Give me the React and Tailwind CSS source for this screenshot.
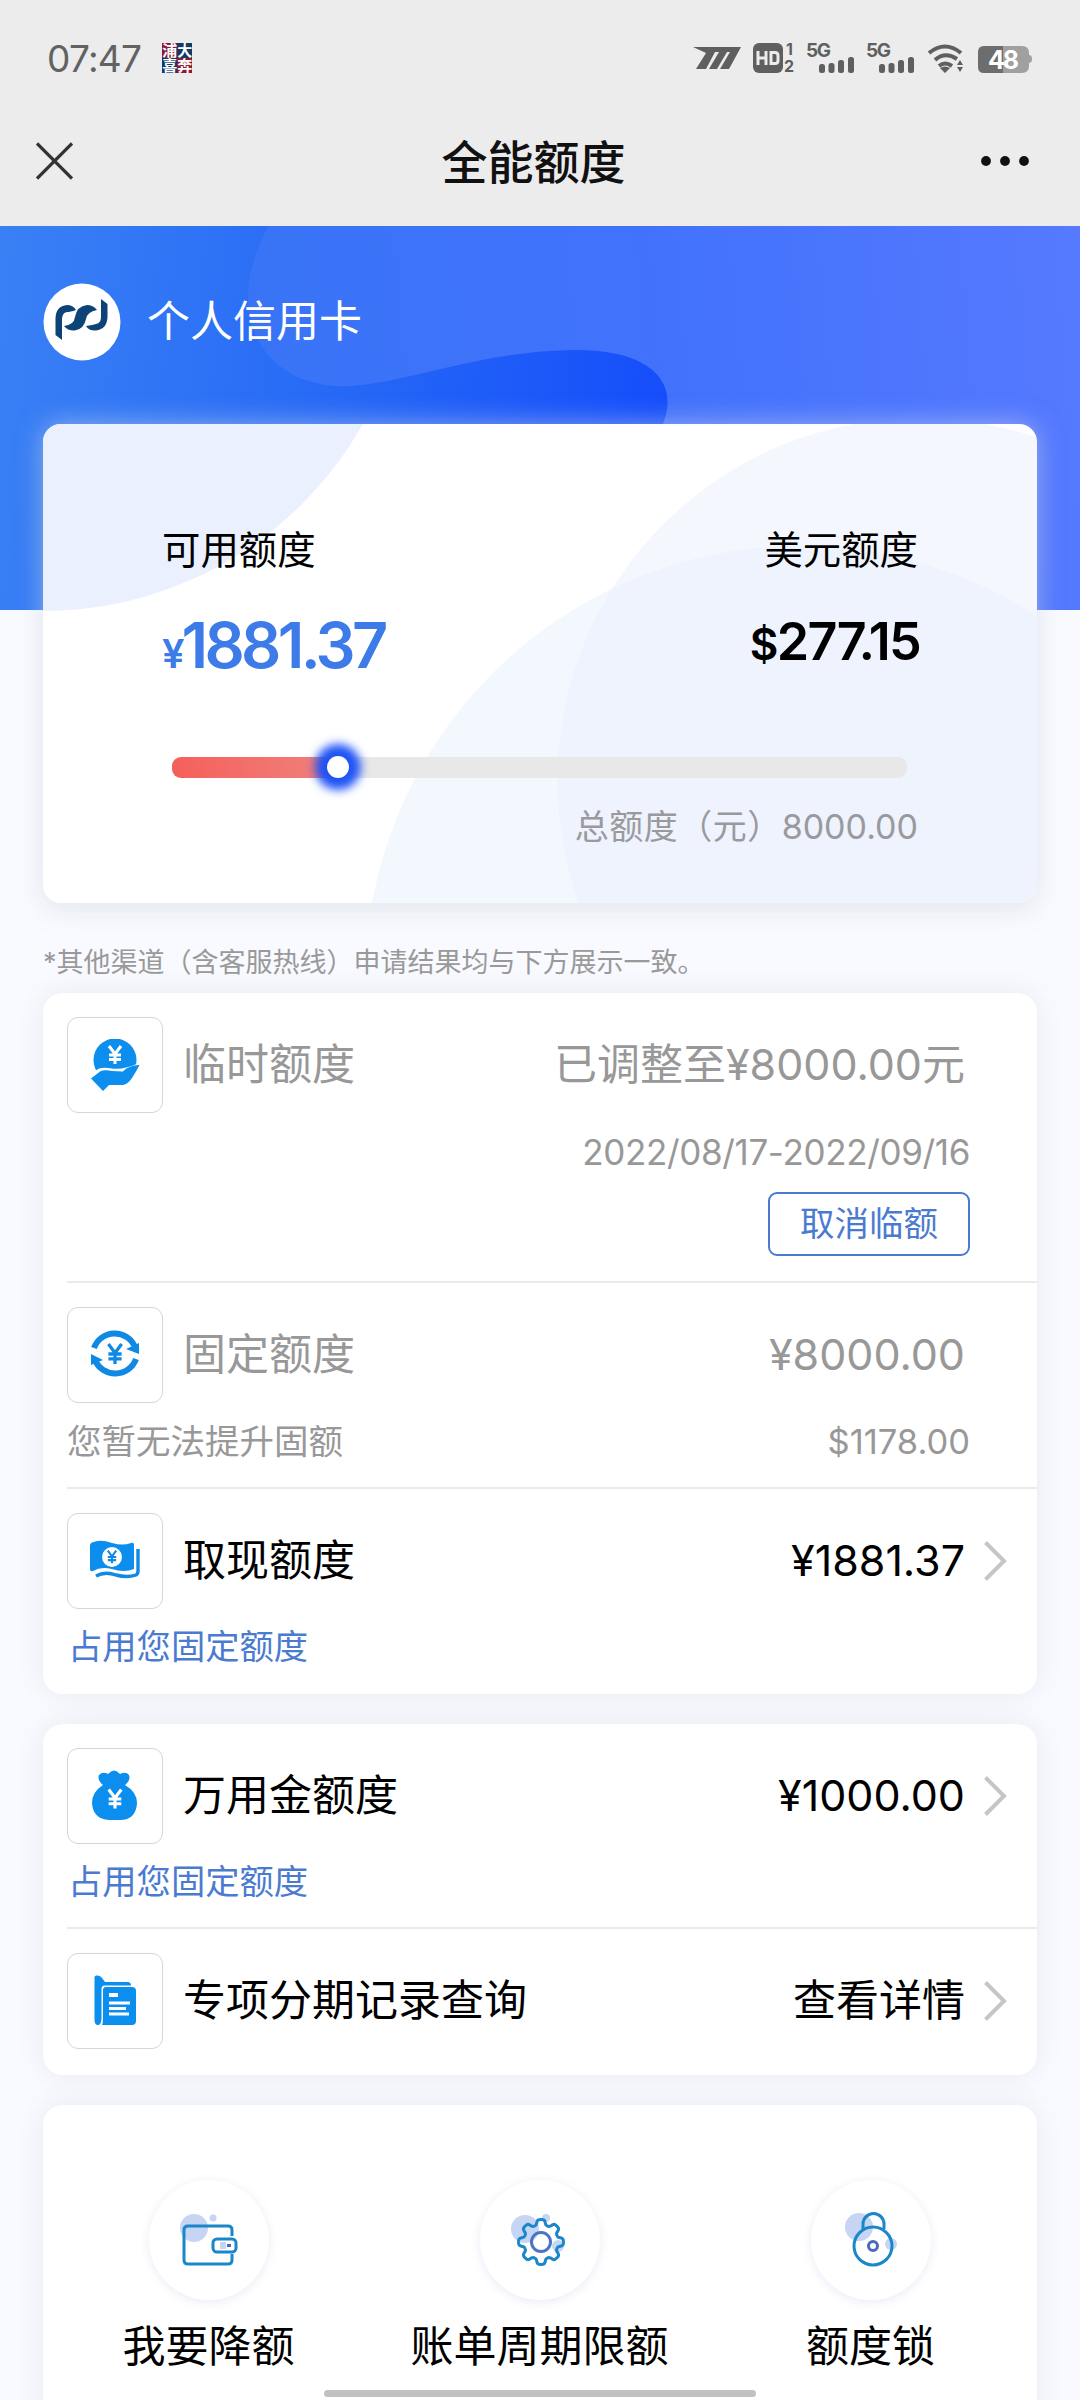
import React from "react";

const FONT = "font-['Inter','Noto_Sans_CJK_SC',sans-serif]";

function StatusBar() {
  return (
    <div className="flex h-[116px] items-center pl-[47px] pr-[48px] text-[#626262]">
      <span className="text-[37px] leading-none tracking-[-0.700px]">07:47</span>
      <div className="ml-[21px] grid h-[30px] w-[30px] grid-cols-2 text-[15px] font-bold leading-[15px] text-white">
        <span className="bg-[#8c1a35]">浦</span>
        <span className="bg-[#123a66]">大</span>
        <span className="bg-[#123a66]">喜</span>
        <span className="bg-[#8c1a35]">奔</span>
      </div>
      <svg className="ml-auto" width="340" height="64" viewBox="692 25 340 64" fill="#5f5f5f">
        <path d="M693 46 H741 L729 68 H720 L730 51 H727 L717 68 H709 L719 51 H715 L706 68 H696 L706 52 Z" />
        <rect x="753" y="42" width="30" height="30" rx="6" />
        <path d="M758 50v14M766 50v14M758 57h8M771 51.500h4q3 0 3 3v5q0 3-3 3h-4z" fill="none" stroke="#ececec" strokeWidth="3" />
        <g fontFamily="Inter" fontWeight="700">
          <text x="786" y="54" fontSize="16">1</text>
          <text x="784" y="71" fontSize="16">2</text>
          <text x="806" y="56" fontSize="19" textLength="25">5G</text>
          <text x="866" y="56" fontSize="19" textLength="25">5G</text>
        </g>
        {[819, 879].map((x) => (
          <g key={x}>
            <rect x={x} y="63" width="6" height="9" rx="2.500" />
            <rect x={x + 9.500} y="62" width="6" height="10" rx="2.500" />
            <rect x={x + 19} y="59" width="6" height="13" rx="2.500" />
            <rect x={x + 29} y="56" width="6" height="16" rx="2.500" />
          </g>
        ))}
        <g fill="none" stroke="#5f5f5f" strokeWidth="4">
          <path d="M929 52 Q945 39 961 52" />
          <path d="M935 59 Q945 50 957 58" />
          <path d="M939 65 Q945 60 952 65" />
        </g>
        <path d="M940 67 Q945 64 950 67 L945 72 Z M957 64 L960 59 L963 64 Z M957 66 H963 L960 71 Z" />
        <path d="M984 45 H1003 V72 H984 Q978 72 978 66 V51 Q978 45 984 45" fill="#6d6d6d" />
        <path d="M1003 45 H1022 Q1029 45 1029 52 V54 Q1032 54 1032 58 Q1032 62 1029 62 V65 Q1029 72 1022 72 H1003Z" fill="#a0a0a0" />
        <text x="988" y="68" fontSize="25" fontWeight="700" fontFamily="Inter" fill="#fff" textLength="31">48</text>
      </svg>
    </div>
  );
}

function NavBar() {
  return (
    <div className="flex h-[110px] items-center justify-between pl-[36px] pr-[50px] pb-[20px]">
      <svg width="37" height="38" viewBox="0 0 37 38" stroke="#333" strokeWidth="3.200">
        <path d="M1 1.500 L36 36.500 M36 1.500 L1 36.500" />
      </svg>
      <h1 className="mt-[2px] ml-[14px] text-[46px] font-medium leading-none text-[#111]">全能额度</h1>
      <svg width="50" height="12" viewBox="0 0 50 12" fill="#111">
        <circle cx="6" cy="6" r="4.900" />
        <circle cx="25" cy="6" r="4.900" />
        <circle cx="44" cy="6" r="4.900" />
      </svg>
    </div>
  );
}

function BankLogo() {
  return (
    <svg width="78" height="78" viewBox="0 0 78 78">
      <circle cx="39" cy="39" r="38.500" fill="#fff" />
      <path d="M12.500 52 V35 Q13 23 24 22 Q30 22 33 27 Q27 29 24 29 Q19 30 19 36 V57 Z" fill="#0d4377" />
      <path d="M64.500 21 V34 Q64 46 53 47.500 Q46 48 43 43 Q50 42 53 41 Q58 40 58 34 V16 Z" fill="#0d4377" />
      <path d="M21 43 Q31 42 32 34 Q34 23 44 22 Q50 22 54 27 Q44 29 43 36 Q41 46 32 47.500 Q25 48 21 43 Z" fill="#0d4377" />
    </svg>
  );
}

function Banner() {
  return (
    <section className="relative h-[384px] pt-[57px] pl-[43px]">
      <svg className="absolute inset-0" width="1080" height="384" viewBox="0 226 1080 384">
        <defs>
          <linearGradient id="deep" x1="0" x2="680" y1="300" y2="360" gradientUnits="userSpaceOnUse">
            <stop offset="0" stopColor="#3980f5" />
            <stop offset="0.500" stopColor="#2769f6" />
            <stop offset="1" stopColor="#154dfb" />
          </linearGradient>
          <linearGradient id="light" x1="240" x2="1080" y1="400" y2="330" gradientUnits="userSpaceOnUse">
            <stop offset="0" stopColor="#3874f6" />
            <stop offset="0.500" stopColor="#4272fc" />
            <stop offset="1" stopColor="#5579ff" />
          </linearGradient>
        </defs>
        <rect y="226" width="1080" height="384" fill="url(#deep)" />
        <path d="M268 226 C250 262 240 300 256 335 C272 372 310 388 350 386 C410 382 480 352 570 350 C640 348 682 375 663 424 L640 610 H1080 V226 Z" fill="url(#light)" />
      </svg>
      <div className="relative flex items-center">
        <BankLogo />
        <span className="ml-[26px] mt-[-2px] text-[43px] leading-none text-white">个人信用卡</span>
      </div>
    </section>
  );
}

function QuotaCard() {
  return (
    <section className="relative mx-[43px] mt-[-186px] h-[479px] rounded-[18px] bg-white shadow-[0_0_26px_rgba(225,230,240,0.55),0_8px_26px_rgba(0,0,0,0.06)]">
      <svg className="absolute inset-0 rounded-[18px]" width="994" height="479" viewBox="43 424 994 479">
        <circle cx="43" cy="244" r="367" fill="#eaf0fe" />
        <circle cx="800" cy="981" r="435" fill="#f3f7fe" />
        <circle cx="919.500" cy="780" r="362" fill="#e8effd" fillOpacity="0.480" />
      </svg>
      <div className="relative flex flex-col pl-[119px] pr-[119px] pt-[107px]">
        <div className="flex justify-between text-[38.400px] leading-[38px] text-black">
          <span>可用额度</span>
          <span>美元额度</span>
        </div>
        <div className="mt-[44px] flex h-[64px] justify-between font-semibold">
          <div className="text-[63px] leading-[64px] tracking-[-3.700px] text-[#3d7be8]">
            <span className="text-[40px] tracking-[-3px]">¥</span>1881.37
          </div>
          <div className="mt-[-3px] mr-[-2px] text-[52px] leading-[64px] tracking-[-1.700px] text-black">
            <span className="text-[44px]">$</span>277.15
          </div>
        </div>
        <div className="relative mt-[80px] ml-[10px] h-[21px] w-[735px] rounded-[9px] bg-[#e8e8e8]">
          <div className="h-[21px] w-[166px] rounded-l-[9px] bg-gradient-to-r from-[#f65f5b] to-[#ee817c]" />
          <div className="absolute left-[155px] top-[-1px] h-[22px] w-[22px] rounded-full bg-white shadow-[0_0_10px_12px_#1f54f5]" />
        </div>
        <div className="mt-[32px] text-right text-[34px] leading-[34px] text-[#9a9a9e]">
          <span className="tracking-[0.500px]">总额度（元）</span>8000.00
        </div>
      </div>
    </section>
  );
}

const Yen = ({ x, y, s = 1, color }) => (
  <path transform={`translate(${x} ${y}) scale(${s})`} d="M-6 -9 L0 -1 L6 -9 M0 -1 V9 M-6 0 H6 M-6 4.500 H6" fill="none" stroke={color} strokeWidth="3" />
);

const icons = {
  hand: (
    <>
      <circle cx="25" cy="21" r="21.500" fill="#0b8eee" />
      <path d="M-6 39 L9 29.500 Q14 28 22 29.500 Q34 31 49 24 L58 24 V60 H-6 Z" fill="#fff" />
      <path d="M1 39.500 L10 32.500 Q14 30.500 22 32 L33 32.500 Q38 26.500 49.500 26 Q47 31 42 39 Q38 45 33 46 H19 L13 52 Z" fill="#0b8eee" />
      <Yen x={25} y={16} color="#fff" />
    </>
  ),
  cycle: (
    <>
      <g fill="none" stroke="#1089e4" strokeWidth="6">
        <path d="M4 19 A22 22 0 0 1 45 18" />
        <path d="M46 30 A22 22 0 0 1 5 31" />
      </g>
      <path d="M36 20 L49 14 V25 Z M1 25 L13 31 L1 36 Z" fill="#1089e4" />
      <Yen x={25} y={25} s={1.100} color="#1089e4" />
    </>
  ),
  cash: (
    <>
      <path d="M0 10 Q1 7 4 7 Q11 4 22 8 Q33 11 41 8 Q44 7 44 10 V34 Q34 38 22 34 Q11 31 3 36 Q0 37 0 34 Z" fill="#0b8eee" />
      <path d="M6 41 Q15 36 26 40 Q37 43 46 40 Q48 39 48 36 V14" fill="none" stroke="#1089e4" strokeWidth="3.400" />
      <circle cx="22" cy="22" r="10" fill="#fff" />
      <Yen x={22} y={22} s={0.700} color="#1089e4" />
    </>
  ),
  bag: (
    <>
      <path d="M13 15 Q7 10 9 5 Q13 1 18 4 Q24 -3 30 4 Q36 1 39 5 Q41 10 35 15 Q47 22 47 33 Q46 50 30 50 H19 Q3 49 2 33 Q2 22 13 15 Z" fill="#0b8eee" />
      <Yen x={25} y={29} s={1.050} color="#fff" />
    </>
  ),
  record: (
    <>
      <path d="M4.500 2 Q5 0 7 0.500 Q11 1 12 3 L15 7 H38 Q41 7 41 10.500 H14 Q11.500 11 11.500 14 V44 Q11 50 8 50 Q4.500 50 4.500 45 Z" fill="#0b8eee" />
      <path d="M16 12 H42 Q46 12 46 16 V46 Q46 50 42 50 H12 Q13 48 13 44 V15 Q13 12 16 12 Z" fill="#0b8eee" />
      <path d="M19 20 H28" stroke="#fff" strokeWidth="4" />
      <path d="M19 28 H40 M19 33.500 H36 M19 39 H39" stroke="#fff" strokeWidth="2.800" />
    </>
  ),
};

function Chevron() {
  return (
    <svg className="ml-[19px] mr-[30px]" width="23" height="40" viewBox="0 0 23 40" fill="none" stroke="#c6c6c6" strokeWidth="4">
      <path d="M1.500 1.500 L20 20 L1.500 38.500" />
    </svg>
  );
}

function Row({ icon, title, value, muted, arrow, height, last, children }) {
  return (
    <div className={`ml-[24px] ${height} ${last ? "" : "border-b-2 border-[#ebebeb]"} pt-[24px] ${muted ? "text-[#989898]" : "text-black"}`}>
      <div className="flex h-[96px] items-center">
        <div className="flex h-[96px] w-[96px] items-center justify-center rounded-[11px] border border-[#d6d6d6]">
          <svg width="50" height="52" viewBox="0 0 50 52">{icons[icon]}</svg>
        </div>
        <span className="ml-[20px] mt-[-1px] text-[43px] leading-none">{title}</span>
        <span className={`ml-auto mt-[-1px] text-[43px] leading-none ${arrow ? "" : "mr-[72px]"}`}>{value}</span>
        {arrow && <Chevron />}
      </div>
      {children}
    </div>
  );
}

const cardClass = "mx-[43px] rounded-[20px] bg-white shadow-[0_0_30px_rgba(0,0,0,0.07)]";

const Occupied = () => <div className="ml-[1px] mt-[21px] text-[34.300px] leading-[34px] text-[#4a7bd0]">占用您固定额度</div>;

function Shortcut({ label, children }) {
  return (
    <div className="flex w-[331px] flex-col items-center">
      <div className="flex h-[120px] w-[120px] items-center justify-center rounded-full bg-white shadow-[0_2px_10px_rgba(90,90,190,0.13)]">
        <svg width="60" height="60" viewBox="0 0 60 60" fill="none" stroke="#1b86c8" strokeWidth="3">
          {children}
        </svg>
      </div>
      <span className="mt-[25px] text-[43px] leading-[43px] text-black">{label}</span>
    </div>
  );
}

function gearPath(cx, cy) {
  const pts = [];
  for (let i = 0; i <= 160; i++) {
    const a = (i / 160) * Math.PI * 2;
    const r = 19.800 + 2.700 * Math.tanh(2 * Math.cos(8 * a) + 0.300);
    pts.push(`${(cx + r * Math.sin(a)).toFixed(2)} ${(cy - r * Math.cos(a)).toFixed(2)}`);
  }
  return `M${pts.join("L")}Z`;
}

export default function App() {
  return (
    <div className={`relative h-[2400px] w-[1080px] overflow-hidden bg-[#f8faff] ${FONT}`}>
      <header className="h-[226px] bg-[#ececec]">
        <StatusBar />
        <NavBar />
      </header>
      <Banner />
      <QuotaCard />
      <p className="ml-[43px] mt-[46px] h-[44px] text-[27px] leading-[28px] text-[#999]">*其他渠道（含客服热线）申请结果均与下方展示一致。</p>

      <section className={cardClass}>
        <Row icon="hand" title="临时额度" value="已调整至¥8000.00元" muted height="h-[290px]">
          <div className="mr-[67px] mt-[22px] flex flex-col items-end">
            <span className="text-[35px] leading-[35px] tracking-[-0.350px]">2022/08/17-2022/09/16</span>
            <button className="mt-[22px] h-[64px] w-[202px] rounded-[9px] border-2 border-[#4a7bd0] text-[34.500px] leading-none text-[#4a7bd0]">取消临额</button>
          </div>
        </Row>
        <Row icon="cycle" title="固定额度" value="¥8000.00" muted height="h-[206px]">
          <div className="mr-[67px] mt-[21px] flex justify-between text-[34.500px] leading-[35px]">
            <span>您暂无法提升固额</span>
            <span>$1178.00</span>
          </div>
        </Row>
        <Row icon="cash" title="取现额度" value="¥1881.37" arrow height="h-[205px]" last>
          <Occupied />
        </Row>
      </section>

      <section className={`mt-[30px] ${cardClass}`}>
        <Row icon="bag" title="万用金额度" value="¥1000.00" arrow height="h-[205px]">
          <Occupied />
        </Row>
        <Row icon="record" title="专项分期记录查询" value="查看详情" arrow height="h-[146px]" last />
      </section>

      <section className={`mt-[30px] flex h-[400px] pt-[75px] ${cardClass}`}>
        <Shortcut label="我要降额">
          <circle cx="15" cy="18" r="14" fill="#c6d5f4" stroke="none" />
          <circle cx="34" cy="8" r="3.500" fill="#c6d5f4" stroke="none" />
          <path d="M53 26 V20 Q53 16 49 16 H9 Q5 16 5 20 V50 Q5 54 9 54 H49 Q53 54 53 50 V44" />
          <rect x="34" y="29" width="23" height="13" rx="4" />
          <path d="M41 35.500 H47" stroke="#c6d5f4" strokeWidth="7" />
          <path d="M48 35.500 H52" stroke="#4a68bd" />
        </Shortcut>
        <Shortcut label="账单周期限额">
          <circle cx="15" cy="19" r="14" fill="#c6d5f4" stroke="none" />
          <circle cx="36" cy="8" r="4" fill="#c6d5f4" stroke="none" />
          <circle cx="48" cy="36" r="6" fill="#c6d5f4" stroke="none" />
          <path d={gearPath(31, 32)} />
          <circle cx="31" cy="32" r="9.500" stroke="#4a74c4" />
        </Shortcut>
        <Shortcut label="额度锁">
          <circle cx="18" cy="17" r="14" fill="#c6d5f4" stroke="none" />
          <circle cx="50" cy="34" r="6" fill="#c6d5f4" stroke="none" />
          <circle cx="32" cy="36" r="19" />
          <path d="M22 19 V14 A10.500 10.500 0 0 1 43 14 V19" />
          <circle cx="32" cy="36" r="4.500" stroke="#4a68bd" />
        </Shortcut>
      </section>
      <div className="absolute left-[324px] top-[2390px] h-[7px] w-[432px] rounded-full bg-[#c1c1c1]" />
    </div>
  );
}
